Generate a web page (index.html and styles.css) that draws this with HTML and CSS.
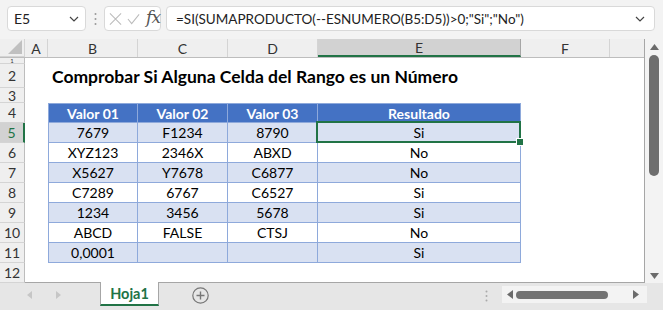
FILE: index.html
```html
<!DOCTYPE html>
<html lang="es">
<head>
    <meta charset="UTF-8">
    <title>Hoja1</title>
    <link rel="stylesheet" href="styles.css">
</head>
<body>
    <div class="formula-bar">
        <div class="box name-box">
            <span>E5</span>
            <svg class="chev" width="10" height="6" viewBox="0 0 10 6"><path d="M1 1l4 4 4-4" fill="none" stroke="#444" stroke-width="1.2"/></svg>
        </div>
        <svg class="grip" width="3" height="14" viewBox="0 0 3 14"><circle cx="1.5" cy="2" r="1" fill="#999"/><circle cx="1.5" cy="7" r="1" fill="#999"/><circle cx="1.5" cy="12" r="1" fill="#999"/></svg>
        <div class="box fx-box">
            <svg width="14" height="14" viewBox="0 0 14 14"><path d="M1 1l12 12M13 1L1 13" stroke="#bbb" stroke-width="1.1" fill="none"/></svg>
            <svg width="14" height="14" viewBox="0 0 14 14"><path d="M1 7l4 5 8-10" stroke="#bbb" stroke-width="1.1" fill="none"/></svg>
            <span class="fx">fx</span>
        </div>
        <div class="box formula-box">
            <span>=SI(SUMAPRODUCTO(--ESNUMERO(B5:D5))&gt;0;"Si";"No")</span>
            <svg class="chev" width="10" height="6" viewBox="0 0 10 6"><path d="M1 1l4 4 4-4" fill="none" stroke="#444" stroke-width="1.2"/></svg>
        </div>
    </div>

    <div class="sheet-area">
        <div class="sheet">
            <div class="row col-head">
                <div class="c hd corner"><svg width="14" height="14" viewBox="0 0 14 14"><path d="M14 0L14 14L0 14Z" fill="#c0c0c0"/></svg></div>
                <div class="c ca">A</div>
                <div class="c cb">B</div>
                <div class="c cc">C</div>
                <div class="c cd">D</div>
                <div class="c ce active">E</div>
                <div class="c cf">F</div>
                <div class="c rest"></div>
            </div>
            <div class="row r1"><div class="c hd">1</div></div>
            <div class="row r2">
                <div class="c hd">2</div>
                <div class="c ca"></div>
                <div class="c title">Comprobar Si Alguna Celda del Rango es un Número</div>
            </div>
            <div class="row r3"><div class="c hd">3</div></div>
            <div class="row">
                <div class="c hd">4</div>
                <div class="c ca"></div>
                <div class="c cb t th first">Valor 01</div>
                <div class="c cc t th">Valor 02</div>
                <div class="c cd t th">Valor 03</div>
                <div class="c ce t th">Resultado</div>
            </div>
            <div class="row">
                <div class="c hd active">5</div>
                <div class="c ca"></div>
                <div class="c cb t band first">7679</div>
                <div class="c cc t band">F1234</div>
                <div class="c cd t band">8790</div>
                <div class="c ce t band selected">Si</div>
            </div>
            <div class="row">
                <div class="c hd">6</div>
                <div class="c ca"></div>
                <div class="c cb t first">XYZ123</div>
                <div class="c cc t">2346X</div>
                <div class="c cd t">ABXD</div>
                <div class="c ce t">No</div>
            </div>
            <div class="row">
                <div class="c hd">7</div>
                <div class="c ca"></div>
                <div class="c cb t band first">X5627</div>
                <div class="c cc t band">Y7678</div>
                <div class="c cd t band">C6877</div>
                <div class="c ce t band">No</div>
            </div>
            <div class="row">
                <div class="c hd">8</div>
                <div class="c ca"></div>
                <div class="c cb t first">C7289</div>
                <div class="c cc t">6767</div>
                <div class="c cd t">C6527</div>
                <div class="c ce t">Si</div>
            </div>
            <div class="row">
                <div class="c hd">9</div>
                <div class="c ca"></div>
                <div class="c cb t band first">1234</div>
                <div class="c cc t band">3456</div>
                <div class="c cd t band">5678</div>
                <div class="c ce t band">Si</div>
            </div>
            <div class="row">
                <div class="c hd">10</div>
                <div class="c ca"></div>
                <div class="c cb t first">ABCD</div>
                <div class="c cc t">FALSE</div>
                <div class="c cd t">CTSJ</div>
                <div class="c ce t">No</div>
            </div>
            <div class="row">
                <div class="c hd">11</div>
                <div class="c ca"></div>
                <div class="c cb t band first">0,0001</div>
                <div class="c cc t band"></div>
                <div class="c cd t band"></div>
                <div class="c ce t band">Si</div>
            </div>
            <div class="row"><div class="c hd">12</div></div>
        </div>

        <div class="vscroll">
            <svg width="9" height="6" viewBox="0 0 9 6"><path d="M4.5 0L9 6H0Z" fill="#6b6b6b"/></svg>
            <div class="vthumb"></div>
            <div class="spacer"></div>
            <svg width="9" height="6" viewBox="0 0 9 6"><path d="M0 0H9L4.5 6Z" fill="#6b6b6b"/></svg>
        </div>
    </div>

    <div class="tab-bar">
        <div class="nav">
            <svg width="5" height="8" viewBox="0 0 5 8"><path d="M5 0V8L0 4Z" fill="#c6c6c6"/></svg>
            <svg width="5" height="8" viewBox="0 0 5 8"><path d="M0 0V8L5 4Z" fill="#c6c6c6"/></svg>
        </div>
        <div class="tab">Hoja1</div>
        <svg class="add" width="17" height="17" viewBox="0 0 17 17"><circle cx="8.5" cy="8.5" r="7.7" fill="none" stroke="#777" stroke-width="1.2"/><path d="M8.5 4.5v8M4.5 8.5h8" stroke="#777" stroke-width="1.4"/></svg>
        <div class="spacer"></div>
        <svg class="grip" width="3" height="12" viewBox="0 0 3 12"><circle cx="1.5" cy="1.5" r="1" fill="#aaa"/><circle cx="1.5" cy="6" r="1" fill="#aaa"/><circle cx="1.5" cy="10.5" r="1" fill="#aaa"/></svg>
        <div class="hscroll">
            <svg width="6" height="9" viewBox="0 0 6 9"><path d="M6 0V9L0 4.5Z" fill="#6b6b6b"/></svg>
            <div class="hthumb"></div>
            <div class="spacer"></div>
            <svg width="6" height="9" viewBox="0 0 6 9"><path d="M0 0V9L6 4.5Z" fill="#6b6b6b"/></svg>
        </div>
    </div>
</body>
</html>
```

FILE: styles.css
```css
* {
    box-sizing: border-box;
}
body {
    margin: 0;
    width: 663px;
    height: 310px;
    overflow: hidden;
    font-family: Lato, "Noto Sans", sans-serif;
    font-size: 14px;
    color: #000;
    background: #f3f3f3;
}

/* formula bar */
.formula-bar {
    height: 39px;
    display: flex;
    align-items: center;
    padding: 0 8px 2px 7px;
    background: #f3f3f3;
}
.box {
    height: 25px;
    background: #fff;
    border: 1px solid #d9d9d9;
    border-radius: 4px;
    display: flex;
    align-items: center;
}
.name-box {
    width: 79px;
    padding: 0 6px 0 6px;
    justify-content: space-between;
    color: #222;
}
.formula-bar .grip {
    margin: 0 7px 0 8px;
}
.fx-box {
    width: 57px;
    padding: 0 0 0 4px;
    gap: 5px;
}
.fx {
    font-family: "DejaVu Serif", serif;
    font-style: italic;
    font-size: 17px;
    color: #555;
    margin: -3px 0 0 1px;
    letter-spacing: -1px;
}
.formula-box {
    flex: 1;
    margin-left: 5px;
    padding: 0 9px 0 9px;
    justify-content: space-between;
    color: #222;
    font-size: 13.5px;
}

/* grid */
.sheet-area {
    display: flex;
    height: 244px;
}
.sheet {
    width: 645px;
    background: #fff;
    border-right: 1px solid #a6a6a6;
    border-bottom: 1px solid #a6a6a6;
}
.row {
    display: flex;
    height: 20px;
}
.col-head {
    height: 19px;
    background: #efefef;
    border-bottom: 1px solid #bdbdbd;
    color: #333;
}
.r1 { height: 6px; }
.r2 { height: 24px; }
.r3 { height: 15px; }
.r1 .hd {
    font-size: 6px;
    line-height: 6px;
    align-items: flex-start;
}
.c {
    flex: none;
    display: flex;
    align-items: center;
    justify-content: center;
    white-space: nowrap;
}
.col-head .c {
    border-right: 1px solid #d4d4d4;
}
.col-head .rest {
    flex: 1;
    border-right: none;
}
.col-head .active {
    background: #d2d2d2;
    border-bottom: 2px solid #217346;
    border-right-color: #a6a6a6;
}
.hd {
    width: 25px;
    background: #efefef;
    border-right: 1px solid #bdbdbd;
    border-bottom: 1px solid #d4d4d4;
    color: #333;
    overflow: hidden;
    font-size: 14px;
}
.corner {
    align-items: flex-end;
    justify-content: flex-end;
    padding: 0 2px 2px 0;
}
.hd.active {
    background: #d2d2d2;
    border-right: 2px solid #217346;
    color: #217346;
}
.ca { width: 23px; }
.cb, .cc, .cd { width: 90px; }
.ce { width: 203px; }
.cf { width: 89px; }

.title {
    align-self: flex-end;
    padding: 0 0 0 4px;
    font-size: 17.5px;
    font-weight: bold;
    height: 24px;
}

/* data table */
.t {
    border-right: 1px solid #8ea9db;
    border-bottom: 1px solid #8ea9db;
}
.t.first {
    border-left: 1px solid #8ea9db;
}
.th {
    background: #4472c4;
    color: #fff;
    font-weight: bold;
    border-top: 1px solid #8ea9db;
}
.band {
    background: #d9e1f2;
}
.selected {
    position: relative;
}
.selected::after {
    content: "";
    position: absolute;
    left: -2px;
    top: -2px;
    right: -1px;
    bottom: -1px;
    border: 2px solid #217346;
}
.selected::before {
    content: "";
    position: absolute;
    right: -4px;
    bottom: -4px;
    width: 6px;
    height: 6px;
    background: #217346;
    border: 1px solid #fff;
    z-index: 1;
}

/* scrollbars */
.vscroll {
    width: 18px;
    display: flex;
    flex-direction: column;
    align-items: center;
    padding: 5px 0 4px 0;
    background: #f3f3f3;
}
.vthumb {
    width: 10px;
    height: 121px;
    margin-top: 5px;
    border-radius: 5px;
    background: #6e6e6e;
}
.spacer {
    flex: 1;
}

.tab-bar {
    height: 27px;
    display: flex;
    align-items: flex-start;
    background: #e6e6e6;
}
.nav {
    width: 100px;
    height: 24px;
    display: flex;
    align-items: center;
    gap: 24px;
    padding-left: 27px;
}
.tab {
    width: 59px;
    height: 24px;
    margin-top: -1px;
    background: #fff;
    border-left: 1px solid #a6a6a6;
    border-right: 1px solid #a6a6a6;
    border-bottom: 2px solid #217346;
    color: #217346;
    font-weight: bold;
    font-size: 14.5px;
    display: flex;
    align-items: center;
    justify-content: center;
}
.add {
    margin: 4px 0 0 33px;
}
.tab-bar .grip {
    margin: 7px 14px 0 0;
}
.hscroll {
    width: 145px;
    height: 17px;
    margin: 3px 16px 0 0;
    background: #f3f3f3;
    display: flex;
    align-items: center;
    padding: 0 8px 0 5px;
}
.hthumb {
    width: 92px;
    height: 8px;
    margin-left: 3px;
    border-radius: 4px;
    background: #737373;
}
```
